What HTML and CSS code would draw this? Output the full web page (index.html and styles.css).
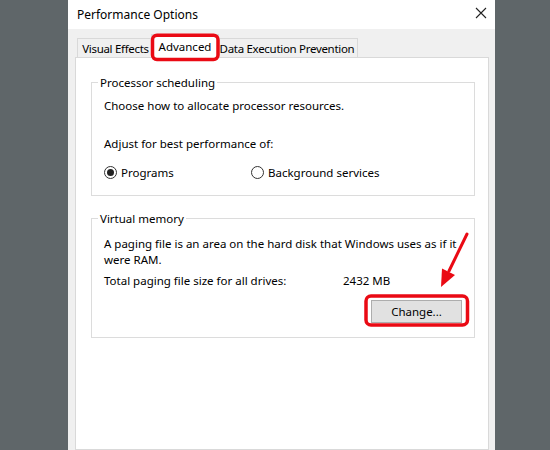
FILE: index.html
```html
<!DOCTYPE html>
<html>
<head>
<meta charset="utf-8">
<link rel="stylesheet" href="styles.css">
</head>
<body>
<div class="screen">
  <div class="dialog">
    <div class="titlebar">
      <span class="title">Performance Options</span>
      <svg class="close" width="12" height="12" viewBox="0 0 12 12"><path d="M1 1 L11 11 M11 1 L1 11" stroke="#222" stroke-width="1.1" fill="none"/></svg>
    </div>
    <div class="client">
      <div class="tabs">
        <div class="tab t1">Visual Effects</div>
        <div class="tab t2 active">Advanced</div>
        <div class="tab t3">Data Execution Prevention</div>
      </div>
      <div class="panel">
        <fieldset class="group g1">
          <legend>Processor scheduling</legend>
          <div class="group-body">
            <p>Choose how to allocate processor resources.</p>
            <p class="adjust">Adjust for best performance of:</p>
            <div class="radios">
              <label class="radio first"><span class="dot checked"></span>Programs</label>
              <label class="radio"><span class="dot"></span>Background services</label>
            </div>
          </div>
        </fieldset>
        <fieldset class="group g2">
          <legend>Virtual memory</legend>
          <div class="group-body">
            <p class="desc">A paging file is an area on the hard disk that Windows uses as if it were RAM.</p>
            <div class="total"><span class="total-label">Total paging file size for all drives:</span><span>2432 MB</span></div>
            <div class="btn-row"><button class="btn">Change...</button></div>
          </div>
        </fieldset>
      </div>
    </div>
  </div>
  <svg class="annot" width="550" height="450" viewBox="0 0 550 450">
    <rect x="152.5" y="35.2" width="65.5" height="24.3" rx="4.5" fill="none" stroke="#ea0a14" stroke-width="3.5"/>
    <rect x="366" y="296" width="101.5" height="29" rx="5" fill="none" stroke="#ea0a14" stroke-width="3.5"/>
    <path d="M467 234 L449 271" stroke="#ea0a14" stroke-width="3" fill="none" stroke-linecap="round"/>
    <path d="M441 287 L455 275 L442 268.5 Z" fill="#ea0a14"/>
  </svg>
</div>
</body>
</html>
```
FILE: styles.css
```css
html, body {
  margin: 0;
  padding: 0;
}
body {
  background: #5f6669;
  font-family: "Noto Sans", "Open Sans", sans-serif;
  font-size: 11.5px;
  color: #000;
}
.screen {
  position: relative;
  width: 550px;
  height: 450px;
  overflow: hidden;
}
.dialog {
  margin-left: 68px;
  width: 427px;
  height: 450px;
  display: flex;
  flex-direction: column;
  background: #f0f0f0;
}
.titlebar {
  height: 29px;
  background: #fff;
  display: flex;
  align-items: center;
  justify-content: space-between;
  padding: 0 8px 0 9px;
  box-sizing: border-box;
}
.title {
  font-size: 12px;
  line-height: 15px;
  margin-top: -1px;
}
.close {
  display: block;
  margin-top: -3px;
}
.client {
  flex: 1;
  display: flex;
  flex-direction: column;
  padding: 0 6px 0 7px;
}
.tabs {
  height: 28px;
  display: flex;
  align-items: flex-end;
  padding-left: 2px;
}
.tab {
  box-sizing: border-box;
  height: 19px;
  border: 1px solid #d9d9d9;
  border-bottom: none;
  background: #f0f0f0;
  text-align: center;
  line-height: 15px;
  padding-top: 2px;
  margin-left: -1px;
  white-space: nowrap;
  letter-spacing: -0.3px;
}
.t1 { width: 77px; margin-left: 0; }
.t2 { width: 64px; }
.t3 { width: 142px; }
.tab.active {
  position: relative;
  z-index: 1;
  width: 68px;
  height: 24px;
  margin: 0 -2px -1px -3px;
  background: #fff;
  padding-top: 4px;
  letter-spacing: 0;
}
.panel {
  flex: 1;
  background: #fff;
  border: 1px solid #d9d9d9;
  padding: 17px 13px 0 15px;
}
.group {
  margin: 0;
  padding: 0;
  min-width: 0;
  border: 1px solid #dcdcdc;
}
.group legend {
  margin-left: 6px;
  padding: 0 2px;
  line-height: 15px;
}
.group-body p {
  margin: 0;
  line-height: 15px;
}
.g1 .group-body {
  padding: 8px 12px 15px;
}
.adjust {
  margin-top: 23px !important;
}
.radios {
  display: flex;
  margin-top: 14px;
  line-height: 15px;
}
.radio {
  display: flex;
  align-items: center;
}
.radio.first {
  width: 147px;
}
.dot {
  box-sizing: border-box;
  width: 13px;
  height: 13px;
  border: 1px solid #333;
  border-radius: 50%;
  background: #fff;
  margin-right: 4px;
  display: flex;
  align-items: center;
  justify-content: center;
}
.dot.checked::after {
  content: "";
  width: 7px;
  height: 7px;
  border-radius: 50%;
  background: #222;
}
.g2 {
  margin-top: 15px;
}
.g2 .group-body {
  padding: 10px 12px 14px;
}
.group-body p.desc {
  line-height: 16px;
  margin-right: -8px;
}
.total {
  display: flex;
  margin-top: 5px;
  line-height: 15px;
}
.total-label {
  width: 239px;
}
.btn-row {
  display: flex;
  justify-content: flex-end;
  margin-top: 12px;
}
.btn {
  width: 91px;
  height: 23px;
  box-sizing: border-box;
  background: #e1e1e1;
  border: 1px solid #adadad;
  font-family: inherit;
  font-size: 11.5px;
  color: #000;
  padding: 0;
  border-radius: 0;
}
.annot {
  position: absolute;
  left: 0;
  top: 0;
  z-index: 2;
  pointer-events: none;
}
```
